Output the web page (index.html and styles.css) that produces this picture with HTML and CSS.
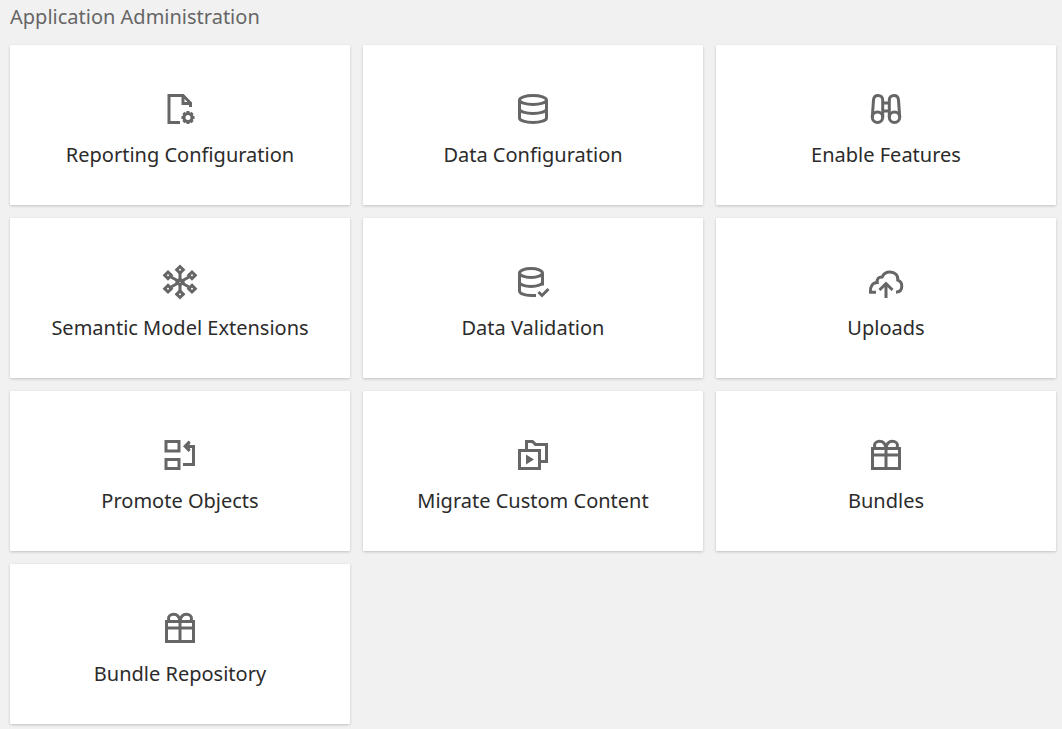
FILE: index.html
```html
<!DOCTYPE html>
<html lang="en">

<head>
    <meta charset="UTF-8">
    <meta name="viewport" content="width=device-width, initial-scale=1">
    <title>Application Administration</title>
    <link rel="stylesheet" href="styles.css">
</head>

<body>

    <main class="admin">
        <h1 class="admin-title">Application Administration</h1>

        <nav class="card-grid">
            <a class="card" href="#reporting">
                <svg class="icon" viewBox="0 0 36 36" aria-hidden="true">
                    <path d="M18 31.5H7v-27h14l7.500 7.500V16" />
                    <path d="M21 4.500v8h7.500" />
                    <circle cx="26" cy="26.5" r="4" />
                    <path d="M26 20v2.500M26 30.500V33M19.500 26.500H22M30 26.500h2.500M21.400 21.900l1.800 1.800M28.800 29.300l1.800 1.800M30.600 21.900l-1.800 1.800M23.200 29.300l-1.800 1.800" />
                </svg>
                <span class="card-label">Reporting Configuration</span>
            </a>
            <a class="card" href="#data">
                <svg class="icon" viewBox="0 0 36 36" aria-hidden="true">
                    <ellipse cx="18" cy="9" rx="13.5" ry="4.5" />
                    <path d="M4.5 9v18c0 2.5 6 4.5 13.5 4.5s13.5-2 13.5-4.5V9" />
                    <path d="M4.5 18c0 2.5 6 4.5 13.5 4.5s13.5-2 13.5-4.5" />
                </svg>
                <span class="card-label">Data Configuration</span>
            </a>
            <a class="card" href="#features">
                <svg class="icon" viewBox="0 0 36 36" aria-hidden="true">
                    <circle cx="9.5" cy="26.3" r="5.2" />
                    <circle cx="26.5" cy="26.3" r="5.2" />
                    <path d="M4.3 26l1.200-17C5.800 6 7.500 4.500 10 4.500c2.700 0 4.700 1.700 4.700 4.500v17" />
                    <path d="M31.7 26l-1.200-17C30.200 6 28.500 4.500 26 4.500c-2.700 0-4.700 1.700-4.700 4.500v17" />
                    <path d="M14.5 12h7M14.5 20h7" />
                </svg>
                <span class="card-label">Enable Features</span>
            </a>
            <a class="card" href="#semantic">
                <svg class="icon" viewBox="0 0 36 36" aria-hidden="true">
                    <path d="M18 9v18M9 13l18 10M27 13L9 23" />
                    <path class="node" d="M18 2.500l3.300 3.300L18 9.100l-3.300-3.300zM18 26.900l3.300 3.300-3.300 3.300-3.300-3.300zM6 8l3.300 3.300L6 14.600l-3.300-3.300zM30 8l3.300 3.300-3.300 3.300-3.300-3.300zM6 21.400l3.300 3.300L6 28l-3.300-3.300zM30 21.400l3.300 3.300L30 28l-3.300-3.300zM18 15l3 3-3 3-3-3z" />
                </svg>
                <span class="card-label">Semantic Model Extensions</span>
            </a>
            <a class="card" href="#validation">
                <svg class="icon" viewBox="0 0 36 36" aria-hidden="true">
                    <ellipse cx="16" cy="9" rx="11.5" ry="4.5" />
                    <path d="M21 31.5h-5c-6.500 0-11.500-2-11.500-4.500V9M27.500 9v12.500" />
                    <path d="M4.5 18c0 2.500 5 4.500 11.500 4.500s11.500-2 11.500-4.500" />
                    <path d="M23.5 28l3.500 3.500 6.500-6.500" />
                </svg>
                <span class="card-label">Data Validation</span>
            </a>
            <a class="card" href="#uploads">
                <svg class="icon" viewBox="0 0 36 36" aria-hidden="true">
                    <path d="M8 28.300H2.500c-.5-6 2-9.500 6.700-9.800-.5-3.500 1.500-5.800 5-5.500C15.500 9.800 18.500 8 22 8c5 0 8.300 3.500 7.800 8.200C32.500 17.300 33.800 19.500 33.800 22c0 3.500-2 6-5.800 6.300" />
                    <path d="M18 34V20M11.500 26l6.500-6.500 6.500 6.500" />
                </svg>
                <span class="card-label">Uploads</span>
            </a>
            <a class="card" href="#promote">
                <svg class="icon" viewBox="0 0 36 36" aria-hidden="true">
                    <path d="M4 4.500h13v9.500H4zM4 22.500h13v9H4z" />
                    <path d="M21 27.500h10.500v-18H24" />
                    <path class="solid" d="M21 9.300l5.600-5.800 2 2-1.800 3.800 1.800 3.800-2 2z" />
                </svg>
                <span class="card-label">Promote Objects</span>
            </a>
            <a class="card" href="#migrate">
                <svg class="icon" viewBox="0 0 36 36" aria-hidden="true">
                    <path d="M4.5 13.500h20v18h-20z" />
                    <path d="M11.500 13V4.500h6l3 3h11v17H25" />
                    <path class="solid" d="M11 17.500v10l8-5z" />
                </svg>
                <span class="card-label">Migrate Custom Content</span>
            </a>
            <a class="card" href="#bundles">
                <svg class="icon" viewBox="0 0 36 36" aria-hidden="true">
                    <path d="M4.5 11.500h27v20h-27zM4.500 18h27M18 11v20" />
                    <path d="M18 11.500C17.500 7 15 4.300 11.500 4.300c-3 0-5 2-5 4.200 0 1.200.4 2 1 3M18 11.500c.5-4.500 3-7.200 6.500-7.200 3 0 5 2 5 4.200 0 1.200-.4 2-1 3" />
                </svg>
                <span class="card-label">Bundles</span>
            </a>
            <a class="card" href="#repository">
                <svg class="icon" viewBox="0 0 36 36" aria-hidden="true">
                    <path d="M4.5 11.500h27v20h-27zM4.500 18h27M18 11v20" />
                    <path d="M18 11.500C17.500 7 15 4.300 11.500 4.300c-3 0-5 2-5 4.200 0 1.200.4 2 1 3M18 11.500c.5-4.500 3-7.200 6.500-7.200 3 0 5 2 5 4.200 0 1.200-.4 2-1 3" />
                </svg>
                <span class="card-label">Bundle Repository</span>
            </a>
        </nav>
    </main>

</body>

</html>
```
FILE: styles.css
```css
* {
    box-sizing: border-box;
}

body {
    margin: 0;
    background-color: #f1f1f1;
    font-family: "Noto Sans", sans-serif;
    color: #2b2b2b;
}

.admin {
    padding: 3px 6px 5px 10px;
}

.admin-title {
    margin: 0 0 14px;
    font-size: 20px;
    font-weight: 400;
    line-height: 28px;
    color: #666;
}

.card-grid {
    display: grid;
    grid-template-columns: repeat(3, 1fr);
    gap: 13px;
}

.card {
    display: flex;
    flex-direction: column;
    align-items: center;
    gap: 14px;
    padding: 46px 16px 36px;
    background-color: #fff;
    border-radius: 1px;
    box-shadow: 0 1px 3px rgba(0, 0, 0, 0.2);
    color: inherit;
    text-decoration: none;
}

.card:hover {
    box-shadow: 0 2px 6px rgba(0, 0, 0, 0.3);
}

.icon {
    width: 36px;
    height: 36px;
    fill: none;
    stroke: #666;
    stroke-width: 3;
}

.icon .node {
    fill: #fff;
    stroke-width: 3;
}

.icon .solid {
    fill: #666;
    stroke: none;
}

.card-label {
    font-size: 20px;
    line-height: 28px;
    text-align: center;
}
```
